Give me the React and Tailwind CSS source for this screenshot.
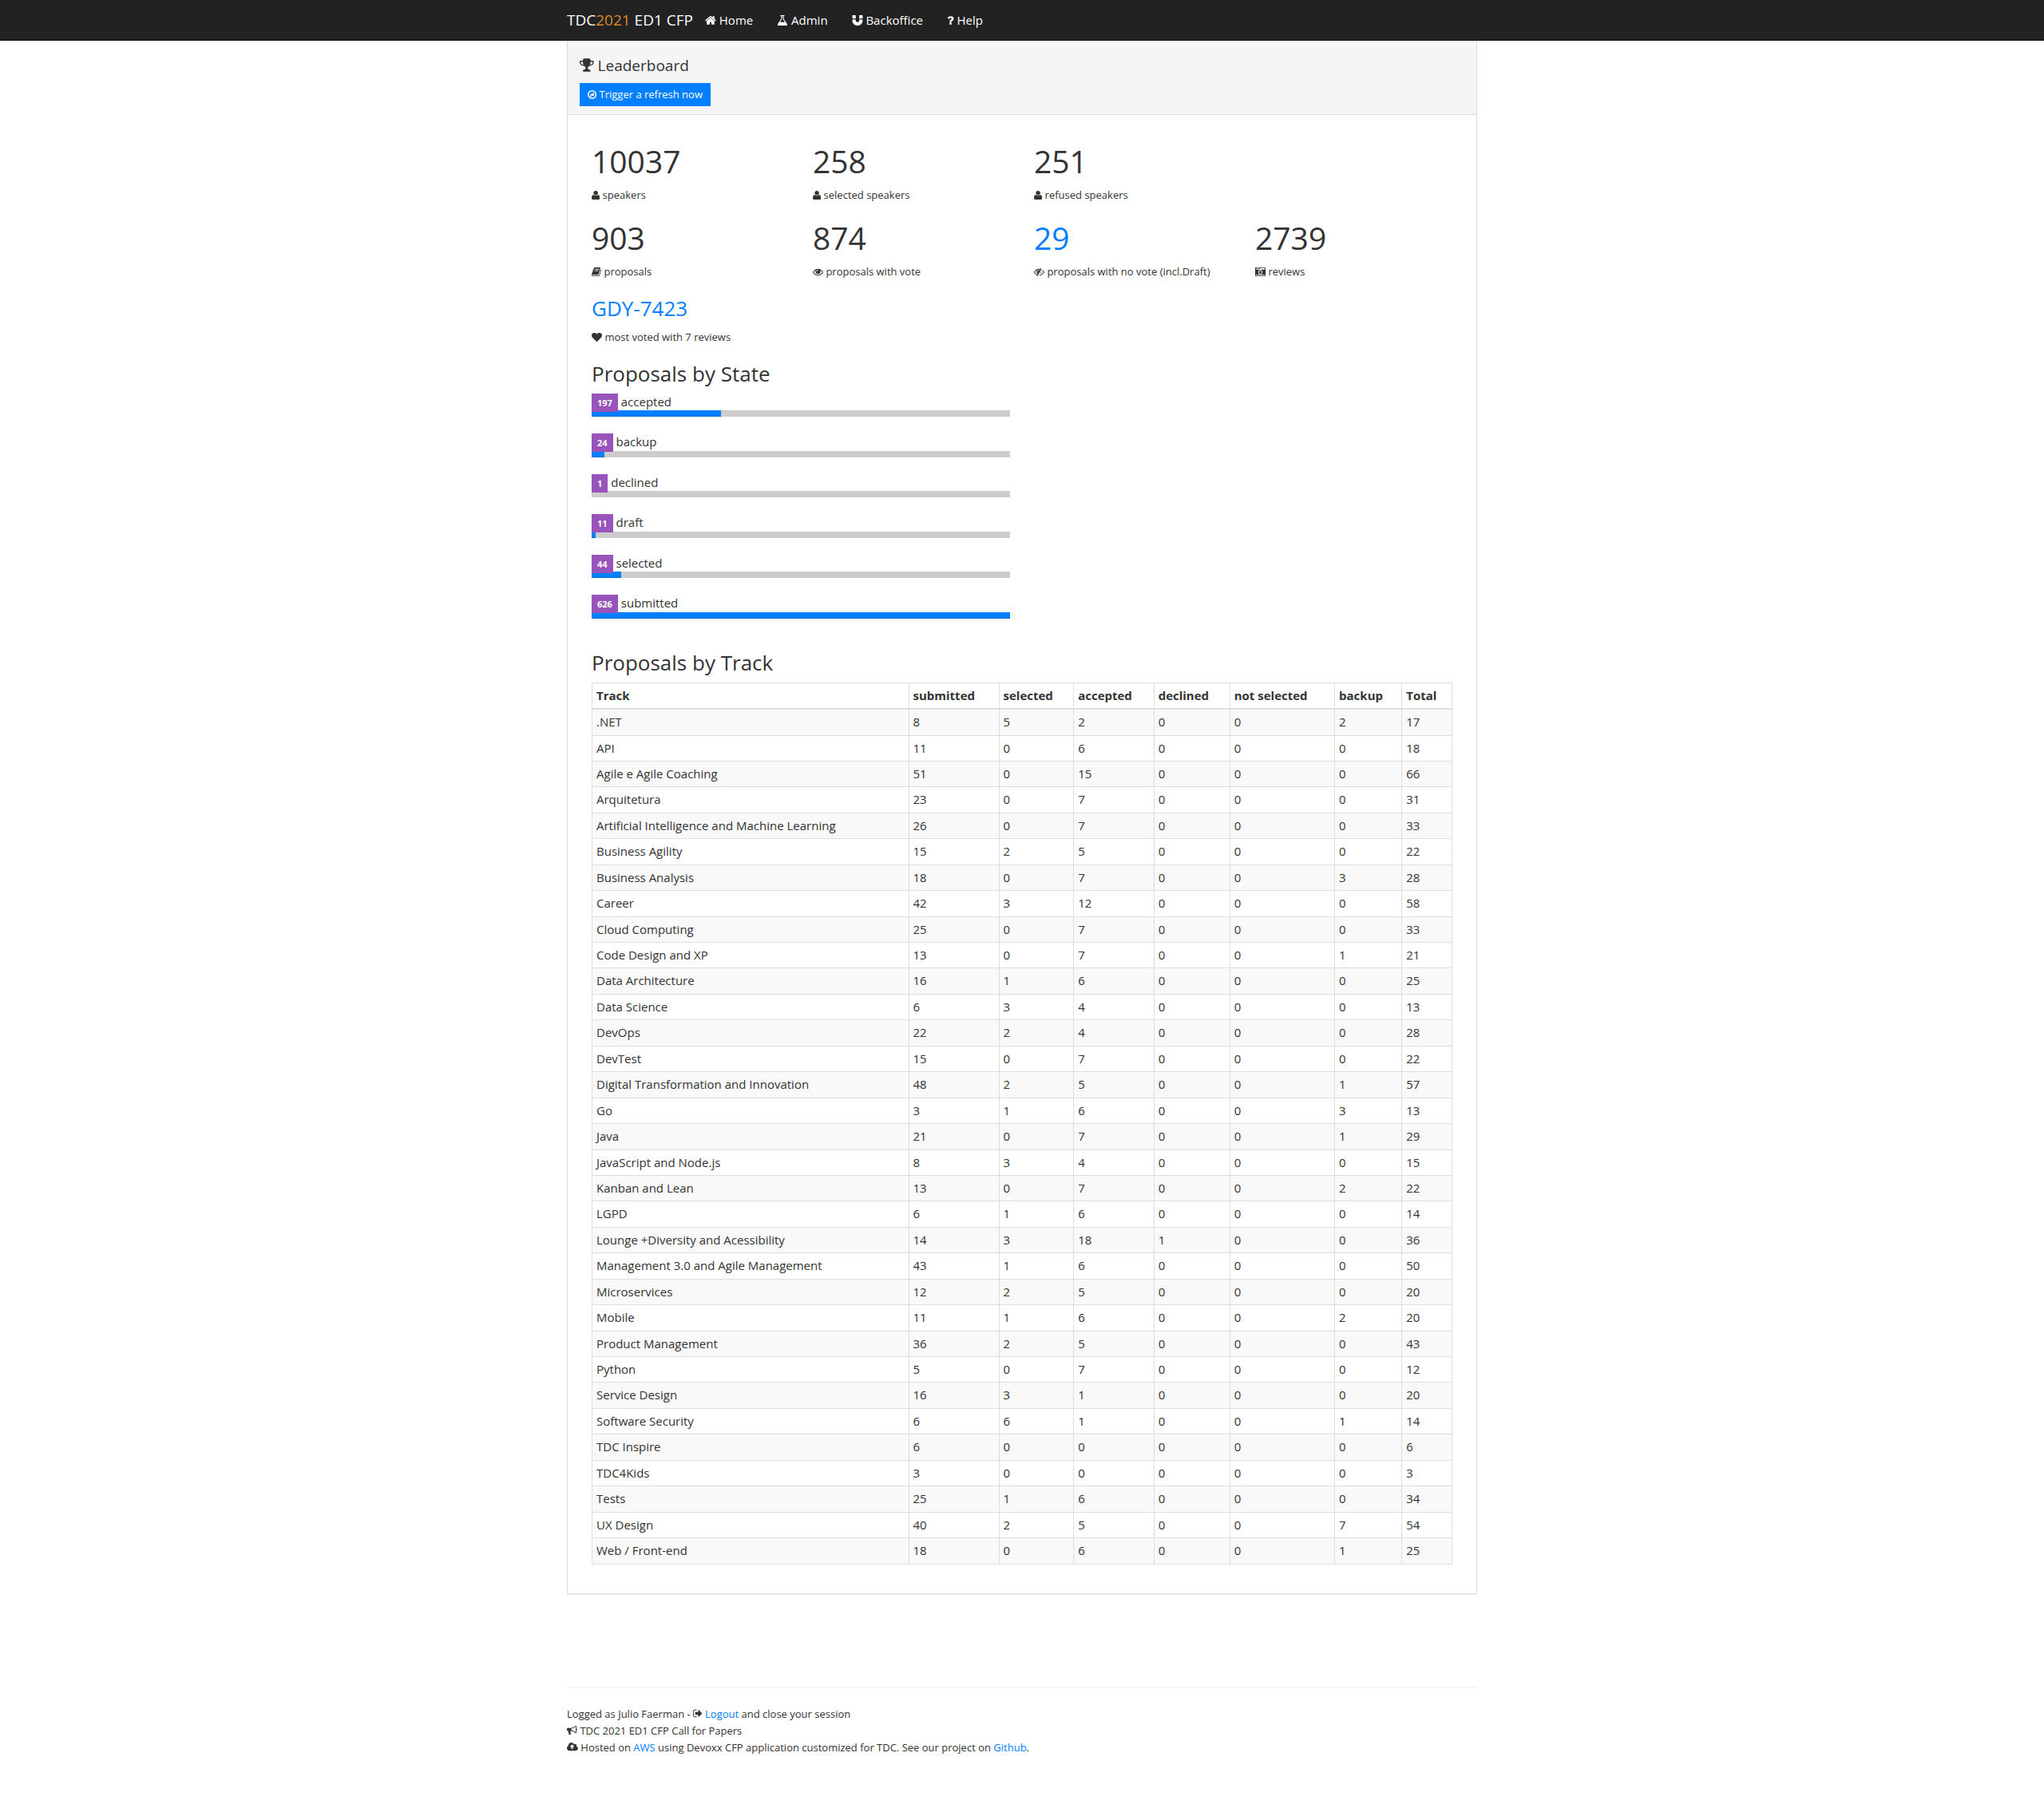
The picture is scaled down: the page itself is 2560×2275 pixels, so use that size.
const ICONS = {
  home: [64, 1664, "M1472 992v480q0 26-19 45t-45 19h-384v-384h-256v384h-384q-26 0-45-19t-19-45v-480q0-1 .5-3t.5-3l575-474 575 474q1 2 1 6zm223-69l-62 74q-8 9-21 11h-3q-13 0-21-7l-692-577-692 577q-12 8-24 7-13-2-21-11l-62-74q-8-10-7-23.5t11-21.5l719-599q32-26 76-26t76 26l244 204v-195q0-14 9-23t23-9h192q14 0 23 9t9 23v408l219 182q10 8 11 21.5t-7 23.5z"],
  flask: [64, 1664, "M1591 1448q56 89 21.5 152.5t-140.5 63.5h-1152q-106 0-140.5-63.5t21.5-152.5l503-793v-399h-64q-26 0-45-19t-19-45 19-45 45-19h512q26 0 45 19t19 45-19 45-45 19h-64v399zm-779-725l-272 429h712l-272-429-20-31v-436h-128v436z"],
  magnet: [64, 1664, "M1664 832v128q0 201-98.5 362t-274 251.5-395.5 90.5-395.5-90.5-274-251.5-98.5-362v-128q0-26 19-45t45-19h384q26 0 45 19t19 45v128q0 52 23.5 90t53.5 57 71 30 64 13 44 2 44-2 64-13 71-30 53.5-57 23.5-90v-128q0-26 19-45t45-19h384q26 0 45 19t19 45zm-1024-640v384q0 26-19 45t-45 19h-384q-26 0-45-19t-19-45v-384q0-26 19-45t45-19h384q26 0 45 19t19 45zm1024 0v384q0 26-19 45t-45 19h-384q-26 0-45-19t-19-45v-384q0-26 19-45t45-19h384q26 0 45 19t19 45z"],
  question: [384, 1024, "M1088 1256v240q0 16-12 28t-28 12h-240q-16 0-28-12t-12-28v-240q0-16 12-28t28-12h240q16 0 28 12t12 28zm316-600q0 54-15.5 101t-35 76.5-55 59.5-57.5 43.5-61 35.5q-41 23-68.5 65t-27.5 67q0 17-12 32.5t-28 15.5h-240q-15 0-25.5-18.5t-10.5-37.5v-45q0-83 65-156.5t143-108.5q59-27 84-56t25-76q0-42-46.5-74t-107.5-32q-65 0-108 29-35 25-107 115-13 16-31 16-12 0-25-8l-164-125q-13-10-15.5-25t5.5-28q160-266 464-266 80 0 161 31t146 83 106 127.5 41 158.5z"],
  trophy: [64, 1664, "M522 883q-74-162-74-371h-256v96q0 78 94.5 162t235.5 113zm1078-275v-96h-256q0 209-74 371 141-29 235.5-113t94.5-162zm128-128v128q0 71-41.5 143t-112 130-173 97.5-215.5 44.5q-42 54-95 95-38 34-52.5 72.5t-14.5 89.5q0 54 30.5 91t97.5 37q75 0 133.5 45.5t58.5 114.5v64q0 14-9 23t-23 9h-832q-14 0-23-9t-9-23v-64q0-69 58.5-114.5t133.5-45.5q67 0 97.5-37t30.5-91q0-51-14.5-89.5t-52.5-72.5q-53-41-95-95-113-5-215.5-44.5t-173-97.5-112-130-41.5-143v-128q0-40 28-68t68-28h288v-96q0-66 47-113t113-47h576q66 0 113 47t47 113v96h288q40 0 68 28t28 68z"],
  compass: [128, 1536, "M896 128a768 768 0 1 1 0 1536a768 768 0 1 1 0-1536zM896 352a544 544 0 1 0 0 1088a544 544 0 1 0 0-1088zM1216 576v444l-640 320v-444zM704 976v158l228-114z"],
  user: [192, 1408, "M1600 1405q0 120-73 189.5t-194 69.5h-874q-121 0-194-69.5t-73-189.5q0-53 3.5-103.5t14-109 26.5-108.5 43-97.5 62-81 85.5-53.5 111.5-20q9 0 42 21.5t74.5 48 108 48 133.5 21.5 133.5-21.5 108-48 74.5-48 42-21.5q61 0 111.5 20t85.5 53.5 62 81 43 97.5 26.5 108.5 14 109 3.5 103.5zm-320-893q0 159-112.5 271.5t-271.5 112.5-271.5-112.5-112.5-271.5 112.5-271.5 271.5-112.5 271.5 112.5 112.5 271.5z"],
  book: [64, 1664, "M1703 478q40 57 18 129l-275 906q-19 64-76.5 107.5t-122.5 43.5h-923q-77 0-148.5-53.5t-99.5-131.5q-24-67-2-127 0-4 3-27t4-37q1-8-3-21.5t-3-19.5q2-11 8-21t16.5-23.5 16.5-23.5q23-38 45-91.5t30-91.5q3-10 .5-30t-.5-28q3-11 17-28t17-23q21-36 42-92t25-90q1-9-2.5-32t.5-28q4-13 22-30.5t22-22.5q19-26 42.5-84.5t27.5-96.5q1-8-3-25.5t-2-26.5q2-8 9-18t18-23 17-21q8-12 16.5-30.5t15-35 16-36 19.5-32 26.5-23.5 36-11.5 47.5 5.5l-1 3q38-9 51-9h761q74 0 114 56t18 130l-274 906q-36 119-71.5 153.5t-128.5 34.5h-869q-27 0-38 15-11 16-1 43 24 70 144 70h923q29 0 56-15.5t35-41.5l300-987q7-22 5-57 38 15 59 43zm-1064 2q-4 13 2 22.5t20 9.5h608q13 0 25.5-9.5t16.5-22.5l21-64q4-13-2-22.5t-20-9.5h-608q-13 0-25.5 9.5t-16.5 22.5zm-83 256q-4 13 2 22.5t20 9.5h608q13 0 25.5-9.5t16.5-22.5l21-64q4-13-2-22.5t-20-9.5h-608q-13 0-25.5 9.5t-16.5 22.5z"],
  eye: [0, 1792, "M1664 960q-152-236-381-353 61 104 61 225 0 185-131.5 316.5t-316.5 131.5-316.5-131.5-131.5-316.5q0-121 61-225-229 117-381 353 133 205 333.5 326.5t434.5 121.5 434.5-121.5 333.5-326.5zm-720-384q0-20-14-34t-34-14q-125 0-214.5 89.5t-89.5 214.5q0 20 14 34t34 14 34-14 14-34q0-86 61-147t147-61q20 0 34-14t14-34zm848 384q0 34-20 69-140 230-376.5 368.5t-499.5 138.5-499.5-139-376.5-368q-20-35-20-69t20-69q140-229 376.5-368t499.5-139 499.5 139 376.5 368q20 35 20 69z"],
  eyeSlash: [0, 1792, "M555 1335l78-141q-87-63-136-159t-49-203q0-121 61-225-229 117-381 353 167 258 427 375zm389-759q0-20-14-34t-34-14q-125 0-214.5 89.5t-89.5 214.5q0 20 14 34t34 14 34-14 14-34q0-86 61-147t147-61q20 0 34-14t14-34zm363-191q0 7-1 9-105 188-315 566t-316 567l-49 89q-10 16-28 16-12 0-134-70-16-10-16-28 0-12 44-87-143-65-263.5-173t-208.5-245q-20-31-20-69t20-69q153-235 380-371t496-136q89 0 180 17l54-97q10-16 28-16 5 0 18 6t31 15.5 33 18.5 31.5 18.5 19.5 11.5q16 10 16 27zm37 447q0 139-79 253.5t-209 164.5l280-502q8 45 8 84zm448 128q0 35-20 69-39 64-109 145-150 172-347.5 267t-419.5 95l74-132q212-18 392.5-137t301.5-307q-115-179-282-294l63-112q95 64 182.5 153t144.5 184q20 34 20 69z"],
  camera: [0, 1792, "M928 832q0-14-9-23t-23-9q-66 0-113 47t-47 113q0 14 9 23t23 9 23-9 9-23q0-40 28-68t68-28q14 0 23-9t9-23zm224 130q0 106-75 181t-181 75-181-75-75-181 75-181 181-75 181 75 75 181zm-1024 574h1536v-128h-1536v128zm1152-574q0-159-112.5-271.5t-271.5-112.5-271.5 112.5-112.5 271.5 112.5 271.5 271.5 112.5 271.5-112.5 112.5-271.5zm-1024-642h384v-128h-384v128zm-128 192h1536v-256h-828l-64 128h-644v128zm1664-256v1280q0 53-37.5 90.5t-90.5 37.5h-1536q-53 0-90.5-37.5t-37.5-90.5v-1280q0-53 37.5-90.5t90.5-37.5h1536q53 0 90.5 37.5t37.5 90.5z"],
  heart: [0, 1792, "M896 1664q-26 0-44-18l-624-602q-10-8-27.5-26t-55.5-65.5-68-97.5-53.5-121-23.5-138q0-220 127-344t351-124q62 0 126.5 21.5t120 58 95.5 68.5 76 68q36-36 76-68t95.5-68.5 120-58 126.5-21.5q224 0 351 124t127 344q0 221-229 450l-623 600q-18 18-44 18z"],
  signOut: [64, 1600, "M704 1440q0 4 1 20t.5 26.5-3 23.5-10 19.5-20.5 6.5h-320q-119 0-203.5-84.5t-84.5-203.5v-704q0-119 84.5-203.5t203.5-84.5h320q13 0 22.5 9.5t9.5 22.5q0 4 1 20t.5 26.5-3 23.5-10 19.5-20.5 6.5h-320q-66 0-113 47t-47 113v704q0 66 47 113t113 47h312l11.5 1 11.5 3 8 5.5 7 9 2 13.5zm928-544q0 26-19 45l-544 544q-19 19-45 19t-45-19-19-45v-288h-448q-26 0-45-19t-19-45v-384q0-26 19-45t45-19h448v-288q0-26 19-45t45-19 45 19l544 544q19 19 19 45z"],
  bullhorn: [0, 1792, "M1664 640q53 0 90.5 37.5t37.5 90.5-37.5 90.5-90.5 37.5v384q0 52-38 90t-90 38q-417-347-812-380-58 19-91 66t-31 100.5 40 92.5q-20 33-23 65.5t6 58 33.5 55 48 50 61.5 50.5q-29 58-111.5 83t-168.5 11.5-132-55.5q-7-23-29.5-87.5t-32-94.5-23-89-15-101 3.5-98.5 22-110.5h-122q-66 0-113-47t-47-113v-192q0-66 47-113t113-47h480q435 0 896-384 52 0 90 38t38 90v384zm-128 604v-954q-394 302-768 343v270q377 42 768 341z"],
  cloudUpload: [-64, 1920, "M1216 864q0-14-9-23l-352-352q-9-9-23-9t-23 9l-351 351q-10 12-10 24 0 14 9 23t23 9h224v352q0 13 9.5 22.5t22.5 9.5h192q13 0 22.5-9.5t9.5-22.5v-352h224q13 0 22.5-9.5t9.5-22.5zm640 288q0 159-112.5 271.5t-271.5 112.5h-1088q-185 0-316.5-131.5t-131.5-316.5q0-130 70-240t188-165q-2-30-2-43 0-212 150-362t362-150q156 0 285.5 87t188.5 231q71-62 166-62 106 0 181 75t75 181q0 76-41 138 130 31 213.5 135.5t83.5 238.5z"],
};

function Icon({ name }) {
  const [x, width, d] = ICONS[name];
  return (
    <svg
      className="inline h-[1em] w-auto align-[-0.125em]"
      viewBox={`${x} 0 ${width} 1792`}
      fill="currentColor"
      fillRule={name === "compass" ? "evenodd" : "nonzero"}
      aria-hidden="true"
    >
      <path d={d} />
    </svg>
  );
}

const NAV = [
  ["home", "Home"],
  ["flask", "Admin"],
  ["magnet", "Backoffice"],
  ["question", "Help"],
];

const STATS = [
  [
    ["10037", "user", "speakers"],
    ["258", "user", "selected speakers"],
    ["251", "user", "refused speakers"],
  ],
  [
    ["903", "book", "proposals"],
    ["874", "eye", "proposals with vote"],
    ["29", "eyeSlash", "proposals with no vote (incl.Draft)", true],
    ["2739", "camera", "reviews"],
  ],
];

const STATES = [
  [197, "accepted", 31],
  [24, "backup", 3],
  [1, "declined", 0],
  [11, "draft", 1],
  [44, "selected", 7],
  [626, "submitted", 100],
];

const COLUMNS = ["Track", "submitted", "selected", "accepted", "declined", "not selected", "backup", "Total"];

const TRACKS = [
  [".NET", 8, 5, 2, 0, 0, 2, 17],
  ["API", 11, 0, 6, 0, 0, 0, 18],
  ["Agile e Agile Coaching", 51, 0, 15, 0, 0, 0, 66],
  ["Arquitetura", 23, 0, 7, 0, 0, 0, 31],
  ["Artificial Intelligence and Machine Learning", 26, 0, 7, 0, 0, 0, 33],
  ["Business Agility", 15, 2, 5, 0, 0, 0, 22],
  ["Business Analysis", 18, 0, 7, 0, 0, 3, 28],
  ["Career", 42, 3, 12, 0, 0, 0, 58],
  ["Cloud Computing", 25, 0, 7, 0, 0, 0, 33],
  ["Code Design and XP", 13, 0, 7, 0, 0, 1, 21],
  ["Data Architecture", 16, 1, 6, 0, 0, 0, 25],
  ["Data Science", 6, 3, 4, 0, 0, 0, 13],
  ["DevOps", 22, 2, 4, 0, 0, 0, 28],
  ["DevTest", 15, 0, 7, 0, 0, 0, 22],
  ["Digital Transformation and Innovation", 48, 2, 5, 0, 0, 1, 57],
  ["Go", 3, 1, 6, 0, 0, 3, 13],
  ["Java", 21, 0, 7, 0, 0, 1, 29],
  ["JavaScript and Node.js", 8, 3, 4, 0, 0, 0, 15],
  ["Kanban and Lean", 13, 0, 7, 0, 0, 2, 22],
  ["LGPD", 6, 1, 6, 0, 0, 0, 14],
  ["Lounge +Diversity and Acessibility", 14, 3, 18, 1, 0, 0, 36],
  ["Management 3.0 and Agile Management", 43, 1, 6, 0, 0, 0, 50],
  ["Microservices", 12, 2, 5, 0, 0, 0, 20],
  ["Mobile", 11, 1, 6, 0, 0, 2, 20],
  ["Product Management", 36, 2, 5, 0, 0, 0, 43],
  ["Python", 5, 0, 7, 0, 0, 0, 12],
  ["Service Design", 16, 3, 1, 0, 0, 0, 20],
  ["Software Security", 6, 6, 1, 0, 0, 1, 14],
  ["TDC Inspire", 6, 0, 0, 0, 0, 0, 6],
  ["TDC4Kids", 3, 0, 0, 0, 0, 0, 3],
  ["Tests", 25, 1, 6, 0, 0, 0, 34],
  ["UX Design", 40, 2, 5, 0, 0, 7, 54],
  ["Web / Front-end", 18, 0, 6, 0, 0, 1, 25],
];

function Navbar() {
  return (
    <nav className="border-b border-[#090909] bg-[#222222] text-white">
      <div className="mx-auto flex h-[50px] max-w-[1140px] items-center pt-0.5">
        <a href="#" className="text-[19px]">
          TDC<span className="text-[#dd8822]">2021</span> ED1 CFP
        </a>
        <ul className="flex">
          {NAV.map(([icon, label]) => (
            <li key={label}>
              <a href="#" className="block px-[15px]">
                <Icon name={icon} /> {label}
              </a>
            </li>
          ))}
        </ul>
      </div>
    </nav>
  );
}

function StatLabel({ icon, children }) {
  return (
    <p className="text-[13px] leading-[22px]">
      <Icon name={icon} /> {children}
    </p>
  );
}

function Stat({ value, icon, label, linked }) {
  return (
    <div className="px-[15px]">
      <h1 className="mt-[21px] mb-[10px] text-[39px] leading-[43px]">
        {linked ? <a href="#" className="text-[#007fff]">{value}</a> : value}
      </h1>
      <StatLabel icon={icon}>{label}</StatLabel>
    </div>
  );
}

function StateBar({ count, label, percent }) {
  return (
    <li className="mb-[21px]">
      <div>
        <span className="bg-[#9954bb] px-[7px] py-1 text-[11px] font-bold text-white">{count}</span> {label}
      </div>
      <div className="h-2 bg-[#cccccc]">
        <div
          className="h-full bg-[#007fff] shadow-[inset_0_-1px_0_rgba(0,0,0,0.15)]"
          style={{ width: `${percent}%` }}
        />
      </div>
    </li>
  );
}

function SectionTitle({ children }) {
  return <h3 className="mt-[21px] mb-[10px] text-[26px] leading-[29px]">{children}</h3>;
}

function TrackTable() {
  return (
    <table className="mb-[21px] w-full border-collapse border border-[#dddddd] text-left">
      <thead>
        <tr>
          {COLUMNS.map((name) => (
            <th key={name} className="border border-b-2 border-[#dddddd] p-[5px] font-bold">{name}</th>
          ))}
        </tr>
      </thead>
      <tbody>
        {TRACKS.map(([track, ...counts]) => (
          <tr key={track} className="odd:bg-[#f9f9f9]">
            <td className="border border-[#dddddd] p-[5px]">{track}</td>
            {counts.map((count, i) => (
              <td key={COLUMNS[i + 1]} className="border border-[#dddddd] p-[5px]">{count}</td>
            ))}
          </tr>
        ))}
      </tbody>
    </table>
  );
}

export default function App() {
  return (
    <div className="min-h-screen bg-white font-['Open_Sans',sans-serif] text-[15px] leading-[1.43] text-[#333333]">
      <Navbar />
      <div className="mx-auto max-w-[1140px]">
        <main className="border border-t-0 border-[#dddddd] shadow-[0_1px_1px_rgba(0,0,0,0.05)]">
          <header className="border-b border-[#dddddd] bg-[#f5f5f5] px-[15px] pt-[21px] pb-[10px]">
            <h3 className="mb-[11px] text-[19px] leading-[21px]">
              <Icon name="trophy" /> Leaderboard
            </h3>
            <button type="button" className="block bg-[#007fff] px-[10px] py-[5px] text-[13px] leading-[19px] text-white">
              <Icon name="compass" /> Trigger a refresh now
            </button>
          </header>
          <div className="p-[15px]">
            {STATS.map((row) => (
              <div key={row[0][2]} className="grid grid-cols-4">
                {row.map(([value, icon, label, linked]) => (
                  <Stat key={label} value={value} icon={icon} label={label} linked={linked} />
                ))}
              </div>
            ))}
            <div className="px-[15px]">
              <SectionTitle>
                <a href="#" className="text-[#007fff]">GDY-7423</a>
              </SectionTitle>
              <StatLabel icon="heart">most voted with 7 reviews</StatLabel>
            </div>
            <section className="w-1/2 px-[15px] pb-5">
              <SectionTitle>Proposals by State</SectionTitle>
              <ul className="flow-root">
                {STATES.map(([count, label, percent]) => (
                  <StateBar key={label} count={count} label={label} percent={percent} />
                ))}
              </ul>
            </section>
            <section className="-mt-[21px] px-[15px]">
              <SectionTitle>Proposals by Track</SectionTitle>
              <TrackTable />
            </section>
          </div>
        </main>
        <footer className="mt-[116px] border-t border-[#eeeeee] pt-[23px] text-[13px] leading-[21px]">
          <p>
            Logged as Julio Faerman - <Icon name="signOut" /> <a href="#" className="text-[#007fff]">Logout</a> and close your session
          </p>
          <p>
            <Icon name="bullhorn" /> TDC 2021 ED1 CFP Call for Papers
          </p>
          <p>
            <Icon name="cloudUpload" /> Hosted on <a href="#" className="text-[#007fff]">AWS</a> using Devoxx CFP application customized for TDC. See our project on <a href="#" className="text-[#007fff]">Github</a>.
          </p>
        </footer>
      </div>
    </div>
  );
}
